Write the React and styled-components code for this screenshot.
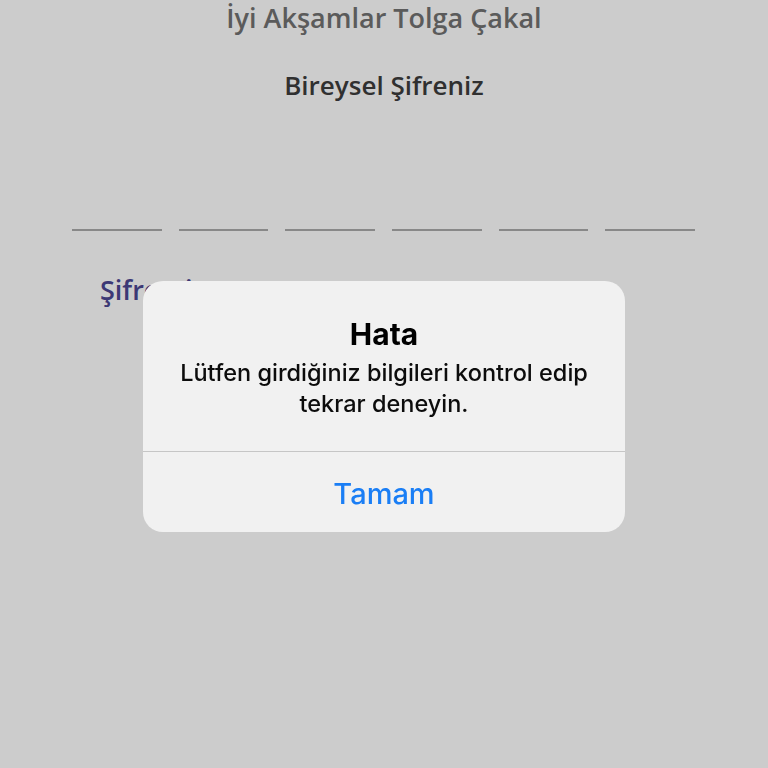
import React from 'react';
import styled, { createGlobalStyle } from 'styled-components';

const GlobalStyle = createGlobalStyle`
  html, body {
    margin: 0;
    padding: 0;
    background: #ffffff;
  }
  body {
    font-family: "Open Sans", "Noto Sans", sans-serif;
    height: 768px;
    overflow: hidden;
  }
`;

const Page = styled.div`
  display: flex;
  flex-direction: column;
  height: 768px;
`;

const Greeting = styled.h1`
  margin: 0;
  text-align: center;
  font-size: 27px;
  line-height: 36px;
  font-weight: 600;
  color: #727272;
`;

const Heading = styled.h2`
  margin: 30px 0 0;
  text-align: center;
  font-size: 26px;
  line-height: 38px;
  font-weight: 600;
  color: #3c3c3c;
`;

const PinRow = styled.div`
  display: flex;
  gap: 17px;
  padding: 0 73px 0 72px;
  margin-top: 125px;
`;

const PinSlot = styled.div`
  flex: 1;
  height: 2px;
  background: #aaaaaa;
`;

const ForgotLink = styled.a`
  margin: 40px 0 0 100px;
  font-size: 27px;
  line-height: 38px;
  font-weight: 600;
  color: #4b4793;
  text-decoration: none;
`;

const Backdrop = styled.div`
  position: fixed;
  inset: 0;
  background: rgba(0, 0, 0, 0.2);
  display: flex;
  justify-content: center;
  align-items: flex-start;
  padding-top: 281px;
`;

const Alert = styled.div`
  width: 482px;
  border-radius: 20px;
  background: #f1f1f1;
  font-family: Inter, "Noto Sans", sans-serif;
  overflow: hidden;
`;

const AlertBody = styled.div`
  padding: 35px 16px 32px;
  text-align: center;
`;

const AlertTitle = styled.div`
  font-size: 30px;
  line-height: 36px;
  font-weight: 700;
  color: #000000;
`;

const AlertMessage = styled.div`
  margin-top: 5px;
  font-size: 23.5px;
  line-height: 31px;
  font-weight: 500;
  color: #0c0c0c;
`;

const AlertButton = styled.button`
  display: block;
  width: 100%;
  height: 81px;
  border: 0;
  border-top: 1px solid #c6c6c6;
  background: transparent;
  font-family: inherit;
  font-size: 29px;
  font-weight: 500;
  color: #1a7ef5;
  padding: 2px 0 0;
  cursor: pointer;
`;

export default function App() {
  return (
    <>
      <GlobalStyle />
      <Page>
        <Greeting>İyi Akşamlar Tolga Çakal</Greeting>
        <Heading>Bireysel Şifreniz</Heading>
        <PinRow>
          {[0, 1, 2, 3, 4, 5].map((i) => (
            <PinSlot key={i} />
          ))}
        </PinRow>
        <ForgotLink>Şifremi Unuttum</ForgotLink>
      </Page>
      <Backdrop>
        <Alert>
          <AlertBody>
            <AlertTitle>Hata</AlertTitle>
            <AlertMessage>
              Lütfen girdiğiniz bilgileri kontrol edip
              <br />
              tekrar deneyin.
            </AlertMessage>
          </AlertBody>
          <AlertButton>Tamam</AlertButton>
        </Alert>
      </Backdrop>
    </>
  );
}
